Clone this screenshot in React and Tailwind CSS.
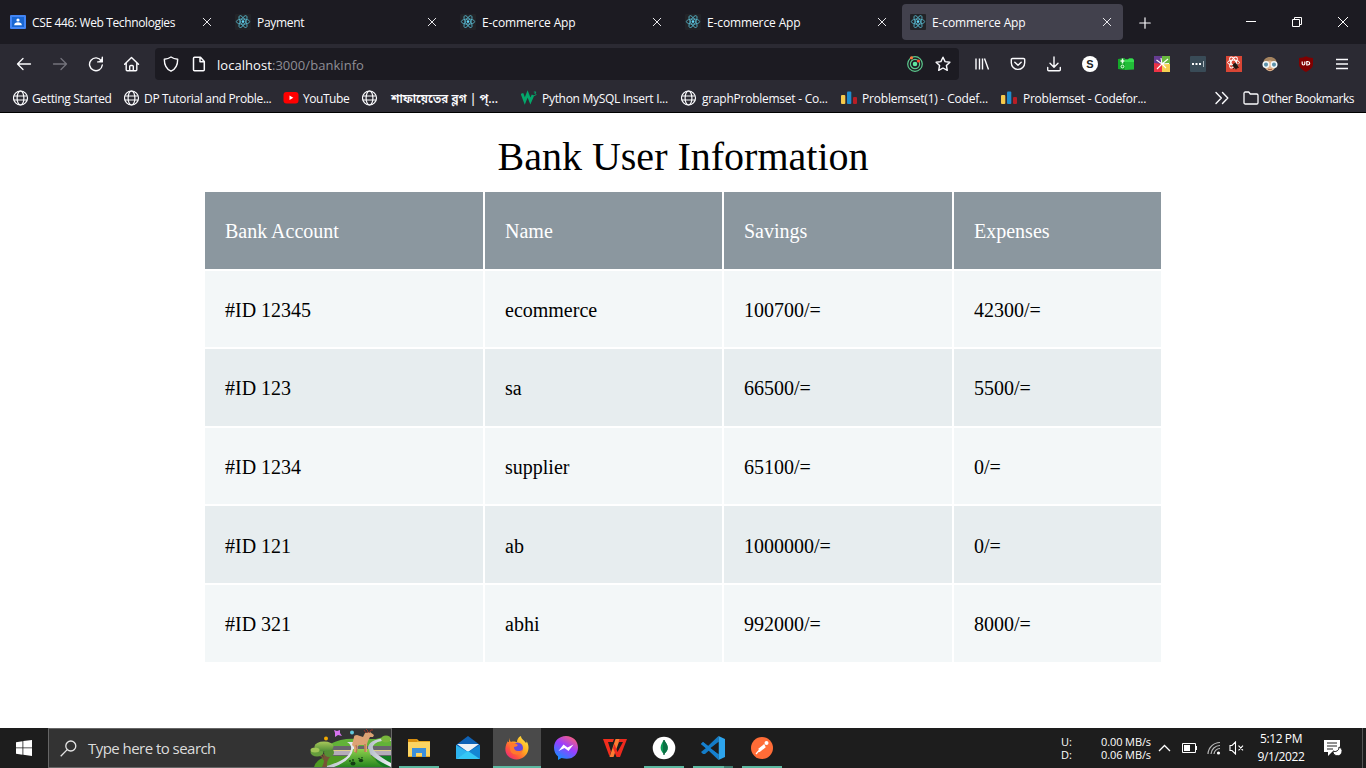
import React from "react";

const ui = "font-['Open_Sans','Noto_Sans_Bengali','Noto_Sans',sans-serif]";

function ReactIcon() {
  return (
    <svg width="16" height="16" viewBox="0 0 16 16" className="shrink-0">
      <rect width="16" height="16" rx="1" fill="#222327" />
      <g fill="none" stroke="#58b9cf" strokeWidth="0.8">
        <ellipse cx="8" cy="7.6" rx="6.7" ry="2.6" />
        <ellipse cx="8" cy="7.6" rx="6.7" ry="2.6" transform="rotate(60 8 7.6)" />
        <ellipse cx="8" cy="7.6" rx="6.7" ry="2.6" transform="rotate(120 8 7.6)" />
      </g>
      <circle cx="8" cy="7.6" r="1.3" fill="#61dafb" />
    </svg>
  );
}

function ClassroomIcon() {
  return (
    <svg width="16" height="16" viewBox="0 0 16 16" className="shrink-0">
      <rect y="1" width="16" height="14" rx="1" fill="#4285f4" />
      <rect x="2" y="3" width="12" height="10" fill="#1967d2" />
      <circle cx="8" cy="6" r="1.6" fill="#fff" />
      <path d="M4.2 11.2c0-2 1.7-2.9 3.8-2.9s3.8.9 3.8 2.9z" fill="#fff" />
    </svg>
  );
}

function Globe() {
  return (
    <svg width="16" height="16" viewBox="0 0 16 16" className="shrink-0" fill="none" stroke="#fbfbfe" strokeWidth="1.2">
      <circle cx="7.5" cy="8" r="7" />
      <ellipse cx="7.5" cy="8" rx="3.4" ry="7" />
      <path d="M.8 6h13.4M.8 10h13.4" />
    </svg>
  );
}

function Bars() {
  return (
    <svg width="16" height="16" viewBox="0 0 16 16" className="shrink-0">
      <rect x="0" y="5" width="4.3" height="9" rx="1" fill="#f6c94b" />
      <rect x="6" y="1.500" width="4.3" height="12.500" rx="1" fill="#1f8dcf" />
      <rect x="12" y="7" width="4" height="7" rx="1" fill="#b71e26" />
    </svg>
  );
}

function YouTube() {
  return (
    <svg width="16" height="16" viewBox="0 0 16 16" className="shrink-0">
      <rect x="0.5" y="2" width="15" height="11.5" rx="3" fill="#f00" />
      <path d="M6.5 5.6v4.4L10.3 7.8z" fill="#fff" />
    </svg>
  );
}

function W3() {
  return (
    <svg width="16" height="16" viewBox="0 0 16 16" className="shrink-0" fill="none" stroke="#04a76b">
      <path d="M1 3.5 3.8 11 6.6 4 9.4 11 12 5" strokeWidth="2.7" />
      <path d="M12.8 2h2.2L13.8 3.5c1.7 0 1.6 2.3-.9 2" strokeWidth="0.9" />
    </svg>
  );
}

function Svg({ children, size = 16, className = "", w = 1.3, color = "#fbfbfe" }) {
  return (
    <svg width={size} height={size} viewBox="0 0 16 16" className={"shrink-0 " + className} fill="none" stroke={color} strokeWidth={w} strokeLinecap="round" strokeLinejoin="round">
      {children}
    </svg>
  );
}

const tabs = [
  { t: "CSE 446: Web Technologies", icon: <ClassroomIcon />, cls: "tracking-[-0.37px]" },
  { t: "Payment", icon: <ReactIcon />, cls: "tracking-[-0.3px]" },
  { t: "E-commerce App", icon: <ReactIcon />, cls: "tracking-[-0.12px]" },
  { t: "E-commerce App", icon: <ReactIcon />, cls: "tracking-[-0.12px]" },
  { t: "E-commerce App", icon: <ReactIcon />, cls: "tracking-[-0.12px]", active: true },
];

function TabBar() {
  return (
    <div className="flex h-11 items-center bg-[#1c1b22] pl-0.5">
      <div className="flex gap-1">
        {tabs.map((tab, i) => (
          <div key={i} className={"flex h-9 w-[221px] items-center rounded pl-2 pr-[11px] " + (tab.active ? "bg-[#42414d]" : "")}>
            {tab.icon}
            <span className={"ml-1.5 flex-1 whitespace-nowrap pt-0.5 text-[12px] leading-4 text-[#fbfbfe] " + tab.cls}>{tab.t}</span>
            <Svg size={10} w={1.6} color="#e8e8ec"><path d="M2 2l12 12M14 2 2 14" /></Svg>
          </div>
        ))}
      </div>
      <div className="ml-4 flex w-3 justify-center pt-0.5">
        <Svg size={12} w={1.6}><path d="M8 1v14M1 8h14" /></Svg>
      </div>
      <div className="ml-auto flex">
        <div className="flex w-[46px] justify-center"><svg width="10" height="10"><path d="M0 4.5h10" stroke="#fff" /></svg></div>
        <div className="flex w-[46px] justify-center"><svg width="10" height="10" fill="none" stroke="#fff"><path d="M.5 2.5h7v7h-7zM2.500 2.500v-2h7v7h-2" /></svg></div>
        <div className="flex w-[46px] justify-center"><svg width="10" height="10"><path d="M0 0l10 10M10 0 0 10" stroke="#fff" /></svg></div>
      </div>
    </div>
  );
}

const extensions = [
  <Svg w={1.4}><path d="M2 2.500v11M5.500 2.500v11M8.500 2.500v11M10.500 2.500l4 11" strokeLinecap="butt" /></Svg>,
  <Svg w={1.4}><path d="M2.500 2.500h11a1.200 1.200 0 0 1 1.200 1.200v3a6.700 6.700 0 0 1-13.400 0v-3a1.200 1.200 0 0 1 1.200-1.200zM4.800 6.200 8 9.200l3.200-3" /></Svg>,
  <Svg w={1.4}><path d="M8 1v10M4 7.300l4 4 4-4M1.700 11.500v2.200a1 1 0 0 0 1 1h10.600a1 1 0 0 0 1-1v-2.200" /></Svg>,
  <span className="flex h-4 w-4 items-center justify-center rounded-full bg-white font-['Liberation_Sans',sans-serif] text-[11px] font-bold leading-none text-[#222]">S</span>,
  <svg width="16" height="16" viewBox="0 0 16 16">
    <path d="M0 3l7-1v12l-7-1z" fill="#15a82a" />
    <path d="M7 3.500h3l1-1h3.500L16 4v9.500L7 14z" fill="#21bd38" />
    <path d="M7 3.500h3l1-1h3.500L16 4v2H7z" fill="#37dc50" />
    <path d="M4.500 2.500v5M2.500 5h4" stroke="#eaffea" strokeWidth="1.500" />
    <circle cx="4.500" cy="10.500" r="1.400" fill="none" stroke="#eaffea" />
  </svg>,
  <svg width="16" height="16" viewBox="0 0 16 16">
    <path d="M0 0h8v8H0z" fill="#653c91" /><path d="M8 0h8v8H8z" fill="#69b83f" />
    <path d="M0 7l8 1v8H0z" fill="#ed3345" /><path d="M8 8h8v8H8z" fill="#f4cf51" />
    <path d="M8 8 2.500 4M8 8 7 2M8 8l6-5M8 8l7-.5M8 8 3 13M8 8l4 4" stroke="#fff" strokeWidth="1.100" />
  </svg>,
  <svg width="16" height="16" viewBox="0 0 16 16">
    <rect width="16" height="16" rx="1" fill="#394b57" />
    <path d="M2 7h2v2H2zM5.500 7h2v2h-2zM9 7h2v2H9z" fill="#fff" /><path d="M13.500 5v6" stroke="#aeb9c0" />
  </svg>,
  <svg width="16" height="16" viewBox="0 0 16 16">
    <rect width="16" height="16" fill="#d94635" />
    <g fill="none" stroke="#fff" strokeWidth="1">
      <ellipse cx="7.500" cy="6.500" rx="6" ry="2.400" /><ellipse cx="7.500" cy="6.500" rx="6" ry="2.400" transform="rotate(60 7.500 6.500)" /><ellipse cx="7.500" cy="6.500" rx="6" ry="2.400" transform="rotate(120 7.500 6.500)" />
    </g>
    <ellipse cx="9.500" cy="10" rx="2.200" ry="3" fill="#241612" transform="rotate(-35 9.500 10)" />
    <path d="M6 9.500l7 2M7 13l5.500-5M9.500 6.500l.5 7" stroke="#241612" strokeWidth=".8" />
  </svg>,
  <svg width="16" height="16" viewBox="0 0 16 16">
    <path d="M2 8h12v2q-2 5-6 5.200Q4 15 2 10z" fill="#e4b890" />
    <path d="M1.300 8C1.300 3 4 1 8 1s6.700 2 6.700 7z" fill="#a58460" />
    <path d="M4 6q4-3 8 0v2H4z" fill="#e4b890" />
    <circle cx="4" cy="8.600" r="2.800" fill="#5e93ab" stroke="#f2f6f8" strokeWidth="1.500" />
    <circle cx="12" cy="8.600" r="2.800" fill="#5e93ab" stroke="#f2f6f8" strokeWidth="1.500" />
    <path d="M6 13.200q2 1 4 0" stroke="#a5583f" fill="none" />
  </svg>,
  <svg width="16" height="16" viewBox="0 0 16 16"><path d="M8 .3Q10.500 2 15 2v6c0 4-3.500 6-7 7.900C4.500 14 1 12 1 8V2Q5.500 2 8 .3z" fill="#800000" /><path d="M4.200 5.500v2.300q0 1.200 1.300 1.200T6.800 7.800V5.500M8.800 5.500V9h.9q2 0 2-1.700t-2-1.800z" fill="none" stroke="#fff" strokeWidth="1.200" /></svg>,
  <svg width="16" height="16" viewBox="0 0 16 16"><path d="M2 3.500h12M2 8h12M2 12.500h12" stroke="#fbfbfe" strokeWidth="1.300" /></svg>,
];

function Toolbar() {
  return (
    <div className="flex h-10 items-center bg-[#2b2a33] pl-1.5 pr-1.5">
      <div className="flex w-[149px]">
        <div className="flex w-9 justify-center"><Svg><path d="M14.500 8H1.500M7 2.500 1.500 8 7 13.500" /></Svg></div>
        <div className="flex w-9 justify-center"><Svg color="#74737c"><path d="M1.500 8h13M9 2.500 14.500 8 9 13.500" /></Svg></div>
        <div className="flex w-9 justify-center"><Svg w={1.4}><path d="M13.300 4.800A6.400 6.400 0 1 0 14.300 9M14.300 1.300v4.600H9.700" /><path d="M14.300 2v3.900h-3.900z" fill="#fbfbfe" stroke="none" /></Svg></div>
        <div className="flex w-9 justify-center"><Svg w={1.4}><path d="M.6 8.300 7.500 1.500l7 6.800M2.200 7v6.800a1 1 0 0 0 1 1h8.600a1 1 0 0 0 1-1V7M5.700 14.500v-4a1 1 0 0 1 1-1h1.600a1 1 0 0 1 1 1v4" /></Svg></div>
      </div>
      <div className="flex h-8 w-[804px] items-center rounded bg-[#1c1b22] pl-2 pr-2">
        <Svg w={1.4}><path d="M8 1c2 1.400 4.200 2 6.700 2.200C14.700 9 12.500 13.200 8 15.200 3.500 13.200 1.300 9 1.300 3.200 3.800 3 6 2.400 8 1z" /></Svg>
        <Svg w={1.5} className="ml-3"><path d="M2.500 2.300a1 1 0 0 1 1-1h6L13.300 5.500v8.200a1 1 0 0 1-1 1H3.500a1 1 0 0 1-1-1zM9 1.500v4.200h4" /></Svg>
        <span className="ml-2.5 flex-1 whitespace-nowrap pt-px text-[13px] leading-4 tracking-[0.05px] text-[#8f8e96]"><span className="text-[#fbfbfe]">localhost</span>:3000/bankinfo</span>
        <svg width="16" height="16" viewBox="0 0 16 16" fill="none">
          <circle cx="8" cy="8" r="7.300" stroke="#5cc98d" strokeWidth="1.200" /><circle cx="8" cy="8" r="4.600" stroke="#5cc98d" strokeWidth="1.200" />
          <circle cx="8" cy="8" r="2.300" fill="#5fe5a0" /><circle cx="4.500" cy="1.800" r="1.600" fill="#ff7a3c" /><circle cx="11.500" cy="5" r="1.600" fill="#ff4b2b" />
        </svg>
        <Svg w={1.4} className="ml-3"><path d="M8 1.200l2.100 4.400 4.800.6-3.500 3.300.9 4.800L8 12l-4.300 2.300.9-4.800L1.100 6.200l4.800-.6z" /></Svg>
      </div>
      <div className="ml-[5px] flex">
        {extensions.map((e, i) => <div key={i} className="flex w-9 justify-center">{e}</div>)}
      </div>
    </div>
  );
}

const marks = [
  { t: "Getting Started", w: "w-[111px]", gap: "ml-[3px]", icon: <Globe />, cls: "tracking-[-0.35px]" },
  { t: "DP Tutorial and Proble...", w: "w-[159px]", gap: "ml-1", icon: <Globe />, cls: "tracking-[-0.33px]" },
  { t: "YouTube", w: "w-[79px]", gap: "ml-1", icon: <YouTube />, cls: "tracking-[-0.45px]" },
  { t: "শাফায়েতের ব্লগ | প্...", w: "w-[159px]", gap: "ml-[13px]", icon: <Globe />, cls: "font-semibold" },
  { t: "Python MySQL Insert I...", w: "w-[160px]", gap: "ml-[5px]", icon: <W3 />, cls: "tracking-[-0.3px]" },
  { t: "graphProblemset - Co...", w: "w-[160px]", gap: "ml-[5px]", icon: <Globe />, cls: "tracking-[-0.25px]" },
  { t: "Problemset(1) - Codef...", w: "w-[160px]", gap: "ml-[5px]", icon: <Bars />, cls: "tracking-[-0.2px]" },
  { t: "Problemset - Codefor...", w: "w-[160px]", gap: "ml-1.5", icon: <Bars />, cls: "tracking-[-0.25px]" },
];

function Bookmarks() {
  return (
    <div className="flex h-[29px] items-center border-b border-black bg-[#2b2a33] pl-[13px] text-[12px] leading-4 text-[#fbfbfe]">
      {marks.map((m, i) => (
        <div key={i} className={"flex shrink-0 items-center " + m.w}>
          {m.icon}
          <span className={"whitespace-nowrap pt-0.5 " + m.gap + " " + m.cls}>{m.t}</span>
        </div>
      ))}
      <div className="ml-auto flex items-center pr-3">
        <Svg w={1.4} className="mr-[13px]"><path d="M2 2.500 7.300 8 2 13.500M8.500 2.500 13.800 8l-5.300 5.500" /></Svg>
        <Svg w={1.3}><path d="M1 3.300a1.300 1.300 0 0 1 1.300-1.300h3.400l1.600 2h6.400A1.300 1.300 0 0 1 15 5.300v7.400a1.300 1.300 0 0 1-1.300 1.300H2.300A1.300 1.300 0 0 1 1 12.700z" /></Svg>
        <span className="ml-[3px] w-[92px] whitespace-nowrap pt-0.5 tracking-[-0.46px]">Other Bookmarks</span>
      </div>
    </div>
  );
}

const rows = [
  ["#ID 12345", "ecommerce", "100700/=", "42300/="],
  ["#ID 123", "sa", "66500/=", "5500/="],
  ["#ID 1234", "supplier", "65100/=", "0/="],
  ["#ID 121", "ab", "1000000/=", "0/="],
  ["#ID 321", "abhi", "992000/=", "8000/="],
];

function BankPage() {
  const line = "grid h-[76.6px] grid-cols-[278px_237px_228px_207px] gap-0.5";
  return (
    <main className="flex flex-1 flex-col items-center bg-white pt-5 font-['Liberation_Serif',serif] text-black">
      <h1 className="h-[59px] whitespace-nowrap text-[40px] leading-[48px]">Bank User Information</h1>
      <div className="flex w-[956px] flex-col gap-0.5 text-[20px] leading-6">
        <div className={line + " text-white"}>
          {["Bank Account", "Name", "Savings", "Expenses"].map((h) => (
            <div key={h} className="flex items-center bg-[#8b979f] pl-5 pt-0.5">{h}</div>
          ))}
        </div>
        {rows.map((r, i) => (
          <div key={i} className={line}>
            {r.map((c, j) => (
              <div key={j} className={"flex items-center pl-5 pt-0.5 " + (i % 2 ? "bg-[#e7edef]" : "bg-[#f3f7f8]")}>{c}</div>
            ))}
          </div>
        ))}
      </div>
    </main>
  );
}

function DeerArt() {
  return (
    <svg width="81" height="38" viewBox="0 0 81 38" className="shrink-0">
      <defs>
        <linearGradient id="hill" x1="0" y1="0" x2="0" y2="1"><stop offset="0" stopColor="#8ed04c" /><stop offset="1" stopColor="#27871f" /></linearGradient>
        <linearGradient id="leaf" x1="0" y1="0" x2="0" y2="1"><stop offset="0" stopColor="#a8c95a" /><stop offset="1" stopColor="#4d8b35" /></linearGradient>
        <linearGradient id="road" x1="0" y1="0" x2="1" y2="0"><stop offset="0" stopColor="#b4bcc8" /><stop offset="1" stopColor="#edf1f4" /></linearGradient>
      </defs>
      <path d="M20 15q12-6 26-5h20q8-3 15-1v9H20z" fill="#62b338" />
      <path d="M22 17h59v10H22z" fill="#68656c" />
      <path d="M22 22h59v4H22z" fill="#b5acb9" />
      <path d="M22 21.500h59" stroke="#dfcf8b" />
      <path d="M4 38q2-8 14-11h63v11z" fill="#4f9b22" />
      <path d="M64 27h17v11H69z" fill="#137d23" />
      <path d="M13 38q27-7 28-18 1-4-4-7h8q4 5 2 12-4 8-19 13z" fill="url(#road)" />
      <path d="M81 12q-15-1-18 5-2 6 18 17v4q-24-11-23-20 2-9 23-9z" fill="url(#road)" />
      <path d="M43 20h16q0 9 15 18H24q18-7 19-18z" fill="url(#hill)" />
      <path d="M12 25q4 6 0 13h5q-1-7 5-12" fill="#765335" />
      <path d="M8 26q4 0 6 5" stroke="#765335" strokeWidth="1.300" fill="none" />
      <ellipse cx="7" cy="23" rx="6.500" ry="4.500" fill="#659d3c" />
      <ellipse cx="19" cy="23.500" rx="5" ry="4.500" fill="#558f34" />
      <ellipse cx="14" cy="17.500" rx="9.500" ry="5" fill="url(#leaf)" />
      <ellipse cx="5" cy="21" rx="4.500" ry="2.500" fill="#a0c557" />
      <path d="M53 8l2-4 5-1 4 3-1 2h-3l-2 4-1 3v8h-2l-1-7h-5l-2 2-1 5h-2v-5l-2-2 2-8q0-2 3-2z" fill="#dda274" />
      <path d="M46 16l1 4-1 4M55 15v8" stroke="#b97750" fill="none" strokeWidth="1.300" />
      <path d="M56 4l-2-3M57 4l1-2-2-2M59 4l2-3 2 0" stroke="#96382b" fill="none" />
      <path d="M24 1l3 1 3-1v3l2 3-4-1-3 2V4z" fill="#d874ef" />
      <circle cx="16" cy="9.500" r="2" fill="#f2a900" /><circle cx="42" cy="3.500" r="2" fill="#61c8dc" />
      <g fill="#143d14"><ellipse cx="43" cy="34.500" rx="2.500" ry="2" /><circle cx="40" cy="32" r=".9" /><circle cx="43" cy="31" r=".9" /><ellipse cx="51" cy="31.500" rx="2.200" ry="1.700" /><circle cx="49" cy="29.500" r=".8" /><circle cx="52" cy="28.800" r=".8" /></g>
      <ellipse cx="76" cy="10" rx="5" ry="3.500" fill="#79b63c" />
    </svg>
  );
}

const apps = [
  { line: "w-10", icon: <svg width="24" height="24" viewBox="0 0 24 24"><path d="M1 3h9l2 2h11v16H1z" fill="#e5a520" /><path d="M1 6h22v14H1z" fill="#fcd462" /><path d="M1 3h9v3H1z" fill="#d98e0e" /><path d="M5 12h14v9h-4v-4H9v4H5z" fill="#3c8fdb" /></svg> },
  { line: "w-0", icon: <svg width="26" height="26" viewBox="0 0 26 26"><path d="M1 10 13 1l12 9v14H1z" fill="#0f62b5" /><path d="M2 9h22L13 17z" fill="#eef2f5" /><path d="M1 10l12 7-12 7z" fill="#2db3ee" /><path d="M25 10 13 17l12 7z" fill="#1585d3" /><path d="M1 24 13 16l12 8z" fill="#35c7f5" /></svg> },
  { line: "w-12", active: true, icon: <svg width="24" height="24" viewBox="0 0 24 24"><defs><linearGradient id="fx" x1="1" y1="0" x2="0" y2="1"><stop offset="0" stopColor="#fff44f" /><stop offset=".4" stopColor="#ffac20" /><stop offset=".7" stopColor="#ff563b" /><stop offset="1" stopColor="#e3169a" /></linearGradient></defs><path d="M5 2c-1 2 0 3 1 4 2-1 5 0 6 0 0-2 1-5 4-6 0 3 3 4 5 7 1-1 1-2 0-3 4 6 3 12-1 16-5 5-13 4-17 0C-1 16 0 9 3 5c0 1 0 1 1 1 0-2 0-3 1-4z" fill="url(#fx)" /><circle cx="12.500" cy="12" r="5.500" fill="#6548de" /><path d="M5 7q4-1 8 2-1 2-4 2 0 4 4 4 4 0 5-2-1 6-7 5.500-6-.5-6-6.500z" fill="#ff7a2d" /></svg> },
  { line: "w-0", icon: <svg width="24" height="24" viewBox="0 0 24 24"><defs><linearGradient id="ms" x1=".2" y1="1" x2=".8" y2="0"><stop offset="0" stopColor="#0b93ff" /><stop offset=".55" stopColor="#9b3dff" /><stop offset="1" stopColor="#ff6274" /></linearGradient></defs><path d="M12 0C5 0 0 5 0 11.500c0 4 1.500 7 4 9V24l3.500-2C18 25 24 19 24 11.500 24 5 19 0 12 0z" fill="url(#ms)" /><path d="M4.500 15l5-6.500 4 3 6-3-5 6.500-4-3z" fill="#fff" /></svg> },
  { line: "w-0", icon: <svg width="24" height="20" viewBox="0 0 24 20"><path d="M0 1h11l-1.200 3H5l3 9.500L6.500 18.500z" fill="#f22d1d" /><path d="M12.500 1h4.500L10.500 19H6.500z" fill="#ff7b32" /><path d="M11.500 6l3 8L20 4h-4.500l1.200-3H24l-7 18h-3.500L10 10z" fill="#ee2a1e" /></svg> },
  { line: "w-10", icon: <svg width="24" height="24" viewBox="0 0 24 24"><circle cx="12" cy="12" r="11.300" fill="#fff" /><path d="M12 4c5 6 5 10 0 14-5-4-4-9 0-14z" fill="#0b9b58" /><path d="M12 4v15" stroke="#0a5c3b" strokeWidth="1.300" /><path d="M12 4c5 6 5 10 0 14z" fill="#0b7044" /></svg> },
  { line: "w-10", icon: <svg width="24" height="24" viewBox="0 0 24 24"><path d="M0 8l2-2 5 4 1-1 9.500-9v6L4 18l-2 0-2-2 5-4z" fill="#147cc7" /><path d="M0 8l2-2 15.500 12v6L8 15z" fill="#1680cf" /><path d="M17.500 0 24 3v18l-6.500 3z" fill="#2da4ec" /><path d="M17.500 6v12L9.500 12z" fill="#1d1d1d" /></svg> },
  { line: "w-10", icon: <svg width="22" height="22" viewBox="0 0 22 22"><circle cx="11" cy="11" r="11" fill="#ff6c37" /><path d="M5 17l7-8M8 12l5-4 1 2-5 4z" stroke="#fff" strokeWidth="1.200" fill="#fff" /><circle cx="15.500" cy="6" r="2" fill="#fff" /></svg> },
];

function Taskbar() {
  return (
    <footer className="flex h-10 shrink-0 bg-[#1d1d1d]">
      <div className="flex w-12 items-center justify-center">
        <svg width="16" height="16" viewBox="0 0 16 16" fill="#fff"><path d="M0 2.200 6.500 1.200v6.300H0zM7.300 1.100 16 0v7.500H7.300zM0 8.300h6.500v6.400L0 13.800zM7.300 8.300H16V16l-8.700-1.200z" /></svg>
      </div>
      <div className="flex w-[344px] items-center border border-[#666] bg-[#333] pl-[11px]">
        <svg width="17" height="17" viewBox="0 0 17 17" fill="none" stroke="#e6e6e6" strokeWidth="1.300"><circle cx="10.800" cy="6" r="5" /><path d="M7.200 9.600.7 16.300" /></svg>
        <span className="ml-[11px] flex-1 whitespace-nowrap text-[15px] leading-5 tracking-[-0.54px] text-[#dcdcdc]">Type here to search</span>
        <DeerArt />
      </div>
      <div className="ml-[3px] flex gap-px">
        {apps.map((a, i) => (
          <div key={i} className={"flex w-12 flex-col items-center " + (a.active ? "bg-[#4a4a4a]" : "")}>
            <div className="flex h-[38px] items-center pt-0.5">{a.icon}</div>
            <div className={"flex h-0.5 justify-end bg-[#5cb8a0] " + a.line}>{i === 6 && <span className="h-0.5 w-[9px] bg-[#3e7c6e]" />}</div>
          </div>
        ))}
      </div>
      <div className="ml-auto flex items-center text-white">
        <div className="grid w-[90px] grid-cols-[40px_50px] text-[11px] leading-[13px] tracking-[-0.1px]">
          <span>U:</span><span className="whitespace-nowrap">0.00 MB/s</span>
          <span>D:</span><span className="whitespace-nowrap">0.06 MB/s</span>
        </div>
        <svg width="13" height="8" viewBox="0 0 13 8" className="ml-[7px]" fill="none" stroke="#fff" strokeWidth="1.300"><path d="M1 7l5.500-5.500L12 7" /></svg>
        <svg width="16" height="10" viewBox="0 0 16 10" className="ml-[11px]" fill="none" stroke="#fff"><path d="M.5.500h13v9H.5zM14.500 3v4" /><path d="M2 2h6v6H2z" fill="#fff" stroke="none" /></svg>
        <svg width="14" height="14" viewBox="0 0 14 14" className="ml-[9px]" fill="none" stroke="#bbb" strokeWidth="1.200"><path d="M1 13A12 12 0 0 1 13 1.500M4 13a9 9 0 0 1 9-8.500M7 13a6 6 0 0 1 6-5.500" /><circle cx="11.500" cy="12" r="1.600" fill="#fff" stroke="none" /></svg>
        <svg width="16" height="14" viewBox="0 0 16 14" className="ml-2" fill="none" stroke="#fff" strokeWidth="1.100"><path d="M1 4.500h2l3.500-3.500v12L3 9.500H1zM9.500 4.700l4.500 4.600M14 4.700 9.500 9.300" /></svg>
        <div className="ml-[11px] flex w-[50px] flex-col items-center whitespace-nowrap text-[12px] leading-[18px] tracking-[-0.4px]"><span>5:12 PM</span><span>9/1/2022</span></div>
        <svg width="18" height="18" viewBox="0 0 18 18" className="ml-[18px]"><path d="M0 1h16v12H8l-4 4v-4H0z" fill="#fff" /><path d="M3 4h10M3 7h10M3 10h6" stroke="#222" /><path d="M9 12a4.500 4.500 0 1 0 6-4 4 4 0 0 1-6 4z" fill="#fff" stroke="#222" /></svg>
        <div className="ml-5 h-10 w-1 border-l border-[#555]" />
      </div>
    </footer>
  );
}

export default function App() {
  return (
    <div className={"flex h-[768px] w-[1366px] flex-col overflow-hidden bg-white " + ui}>
      <TabBar />
      <Toolbar />
      <Bookmarks />
      <BankPage />
      <Taskbar />
    </div>
  );
}
